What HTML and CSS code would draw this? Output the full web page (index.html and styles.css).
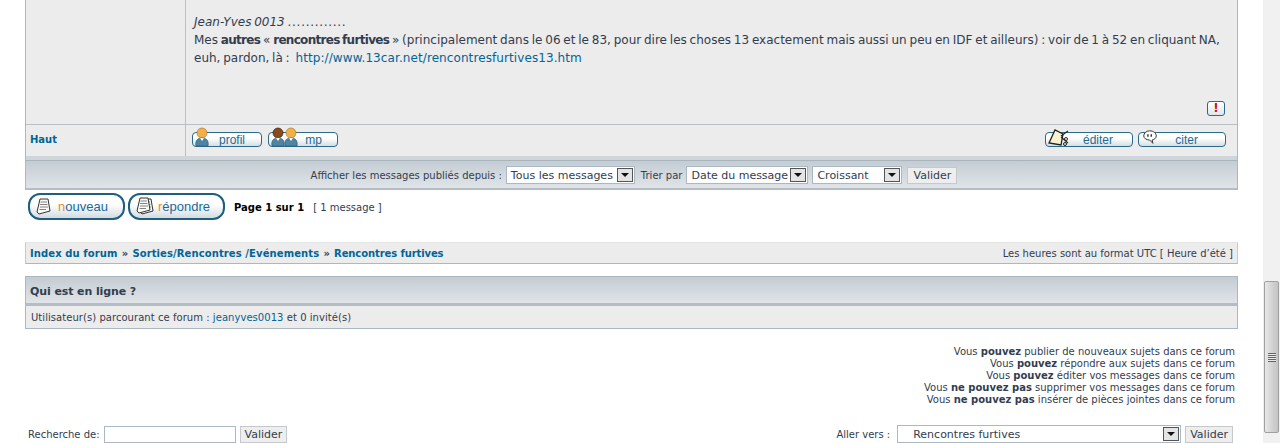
FILE: index.html
```html
<!DOCTYPE html>
<html lang="fr">
<head>
    <meta charset="UTF-8">
    <title>Rencontres furtives</title>
    <link rel="stylesheet" href="styles.css">
</head>
<body>
    <div class="page">
        <main class="content">
            <section class="post">
                <div class="post-row">
                    <div class="author"></div>
                    <div class="message">
                        <div class="message-text">
                            <em>Jean-Yves 0013</em> <span class="dots">.............</span><br>
                            Mes <b>autres</b> « <b>rencontres furtives</b> » (principalement dans le 06 et le 83, pour dire les choses 13 exactement mais aussi un peu en IDF et ailleurs) : voir de 1 à 52 en cliquant NA,<br>
                            euh, pardon, là : <a href="#">http://www.13car.net/rencontresfurtives13.htm</a>
                        </div>
                        <div class="report-row">
                            <span class="report">!</span>
                        </div>
                    </div>
                </div>
                <div class="post-foot">
                    <div class="author-foot"><a href="#">Haut</a></div>
                    <div class="post-actions">
                        <span class="small-btn btn-profil">
                            <svg class="btn-icon icon-user" width="16" height="20" viewBox="0 0 16 20"><use href="#user-orange"/></svg>
                            profil
                        </span>
                        <span class="small-btn btn-mp">
                            <svg class="btn-icon icon-user" width="30" height="20" viewBox="0 0 30 20"><use href="#user-brown"/><use href="#user-orange" x="13"/></svg>
                            mp
                        </span>
                        <span class="spacer"></span>
                        <span class="small-btn btn-editer">
                            <svg class="btn-icon icon-edit" width="22" height="18" viewBox="0 0 22 18">
                                <path d="M1 14 L7 1 L15 5 L13 16 Z" fill="#f7f2d0" stroke="#222" stroke-width="1.3"/>
                                <path d="M13 7 L20 2 M13 8 L20 14" stroke="#222" stroke-width="1.1" fill="none"/>
                                <circle cx="18" cy="10" r="1.5" fill="none" stroke="#222"/>
                                <circle cx="17" cy="15" r="1.5" fill="none" stroke="#222"/>
                            </svg>
                            éditer
                        </span>
                        <span class="small-btn btn-citer">
                            <svg class="btn-icon icon-quote" width="16" height="15" viewBox="0 0 19 18">
                                <path d="M9 1 C14 1 17 4 17 7 C17 10 14 12 12 12 L13 16 L9 12 C5 12 2 10 2 7 C2 4 5 1 9 1 Z" fill="#fff" stroke="#333" stroke-width="1.2"/>
                                <path d="M7 5 V8 M11 5 V8" stroke="#222" stroke-width="1.6"/>
                            </svg>
                            citer
                        </span>
                    </div>
                </div>
                <form class="sort-bar">
                    <span>Afficher les messages publiés depuis :</span>
                    <span class="select select-since">Tous les messages<span class="arrow"></span></span>
                    <span class="sort-label">Trier par</span>
                    <span class="select select-key">Date du message<span class="arrow"></span></span>
                    <span class="select select-dir">Croissant<span class="arrow"></span></span>
                    <button type="button" class="submit">Valider</button>
                </form>
            </section>

            <div class="pagination">
                <span class="big-btn btn-new">
                    <svg width="19" height="18" viewBox="0 0 19 18"><use href="#doc"/></svg>
                    <span class="label"><i>n</i>ouveau</span>
                </span>
                <span class="big-btn btn-reply">
                    <svg width="21" height="19" viewBox="0 0 21 19"><use href="#doc" x="3" y="1"/><use href="#doc"/></svg>
                    <span class="label"><i>r</i>épondre</span>
                </span>
                <span class="page-info"><b>Page 1 sur 1</b><span class="page-count">[ 1 message ]</span></span>
            </div>

            <nav class="crumbs">
                <div class="crumb-links"><a href="#">Index du forum</a> <b>»</b> <a href="#">Sorties/Rencontres /Evénements</a> <b>»</b> <a href="#">Rencontres furtives</a></div>
                <div class="timezone">Les heures sont au format UTC [ Heure d’été ]</div>
            </nav>

            <section class="online">
                <h4>Qui est en ligne ?</h4>
                <p>Utilisateur(s) parcourant ce forum : <a href="#">jeanyves0013</a> et 0 invité(s)</p>
            </section>

            <div class="rights">
                Vous <b>pouvez</b> publier de nouveaux sujets dans ce forum<br>
                Vous <b>pouvez</b> répondre aux sujets dans ce forum<br>
                Vous <b>pouvez</b> éditer vos messages dans ce forum<br>
                Vous <b>ne pouvez pas</b> supprimer vos messages dans ce forum<br>
                Vous <b>ne pouvez pas</b> insérer de pièces jointes dans ce forum
            </div>

            <div class="bottom-row">
                <form class="search">
                    <label for="search-box">Recherche de:</label>
                    <input type="text" id="search-box">
                    <button type="button" class="submit">Valider</button>
                </form>
                <form class="jump">
                    <span class="jump-label">Aller vers :</span>
                    <span class="select select-jump">Rencontres furtives<span class="arrow"></span></span>
                    <button type="button" class="submit">Valider</button>
                </form>
            </div>
        </main>

        <div class="scrollbar">
            <div class="thumb"><span class="grip"></span></div>
        </div>
    </div>

    <svg class="defs" width="0" height="0">
        <defs>
            <g id="user-orange">
                <circle cx="7" cy="6" r="5" fill="#f2b04a" stroke="#b9772a" stroke-width="0.7"/>
                <path d="M1 19 C0 13 3 11 7 11 C11 11 14 13 13 19 Z" fill="#4f84a3" stroke="#2f5f7c" stroke-width="0.7"/>
                <path d="M5 11 L7 14 L9 11 Z" fill="#fff"/>
            </g>
            <g id="user-brown">
                <circle cx="7" cy="6" r="5" fill="#8a4a1c" stroke="#3f2210" stroke-width="0.7"/>
                <path d="M1 19 C0 13 3 11 7 11 C11 11 14 13 13 19 Z" fill="#4f84a3" stroke="#2f5f7c" stroke-width="0.7"/>
                <path d="M5 11 L7 14 L9 11 Z" fill="#fff"/>
            </g>
            <g id="doc">
                <path d="M5 1 H13 L15 13 L4 16 L2 14 Z" fill="#fbfbf8" stroke="#333" stroke-width="1"/>
                <path d="M5.5 4 H12 M5 6.5 H12.5 M5 9 H13 M4.5 11.5 H11" stroke="#666" stroke-width="0.8"/>
            </g>
        </defs>
    </svg>
</body>
</html>
```

FILE: styles.css
```css
html, body {
    margin: 0;
    padding: 0;
    height: 443px;
    overflow: hidden;
    background-color: #ffffff;
}

body {
    font-family: "DejaVu Sans", Verdana, sans-serif;
    font-size: 10px;
    color: #323d4f;
}

a {
    color: #006597;
    text-decoration: none;
}

.defs {
    display: block;
    height: 0;
}

.page {
    display: flex;
    height: 443px;
}

.content {
    width: 1213px;
    margin-left: 25px;
    flex: none;
}

/* post */
.post {
    border-left: 1px solid #a9b8c2;
    border-right: 1px solid #a9b8c2;
    background-color: #ececec;
}

.post-row {
    display: flex;
    height: 124px;
    border-bottom: 1px solid #b8c0c6;
}

.author {
    width: 159px;
    flex: none;
    border-right: 1px solid #b8c0c6;
}

.message {
    flex: 1;
    display: flex;
    flex-direction: column;
    padding: 13px 12px 8px 8px;
}

.message-text {
    flex: 1;
    font-size: 12px;
    line-height: 18px;
    word-spacing: -1px;
    white-space: nowrap;
}

.message-text b {
    letter-spacing: -0.7px;
}

.message-text a {
    margin-left: 3px;
    letter-spacing: 0.09px;
}

.dots {
    letter-spacing: 0.7px;
}

.report-row {
    display: flex;
    justify-content: flex-end;
}

.report {
    width: 16px;
    height: 13px;
    border: 1px solid #2a6a8a;
    border-radius: 3px;
    background: linear-gradient(#ffffff, #dfe5ea);
    color: #d01010;
    font-size: 12px;
    font-weight: bold;
    line-height: 13px;
    text-align: center;
}

.post-foot {
    display: flex;
    height: 31px;
    border-bottom: 1px solid #cfd5da;
    background-color: #ececec;
}

.author-foot {
    width: 155px;
    flex: none;
    padding: 9px 0 0 4px;
    border-right: 1px solid #b8c0c6;
    font-weight: bold;
}

.post-actions {
    flex: 1;
    display: flex;
    gap: 6px;
    padding: 7px 11px 0 6px;
}

.spacer {
    flex: 1;
}

.small-btn {
    position: relative;
    height: 13px;
    border: 1px solid #2a6a8a;
    border-radius: 4px;
    background: linear-gradient(#ffffff 40%, #d5dde3);
    font-family: "Liberation Sans", Arial, sans-serif;
    font-size: 12px;
    line-height: 14px;
    color: #1f6a94;
    text-align: right;
}

.btn-icon {
    position: absolute;
}

.icon-user {
    left: 2px;
    bottom: -1px;
}

.icon-edit {
    left: 2px;
    bottom: -1px;
}

.icon-quote {
    left: 3px;
    bottom: 1px;
}

.btn-profil {
    width: 52px;
    padding-right: 16px;
}

.btn-mp {
    width: 53px;
    padding-right: 15px;
}

.btn-editer {
    width: 67px;
    padding-right: 19px;
}

.btn-citer {
    width: 59px;
    padding-right: 27px;
    margin-left: -1px;
}

.sort-bar {
    display: flex;
    align-items: center;
    justify-content: center;
    gap: 4px;
    height: 26px;
    padding: 2px 0 0 5px;
    border-top: 3px solid #d0d5da;
    border-bottom: 2px solid #b5bdc4;
    background: linear-gradient(#c3ccd3, #e0e4e8);
    box-shadow: inset 0 1px 0 #a9b5bd;
}

.sort-bar .submit {
    width: 50px;
    margin-left: 1px;
    padding: 0;
}

.sort-label {
    margin-left: 2px;
}

.select {
    display: inline-flex;
    align-items: center;
    justify-content: space-between;
    box-sizing: border-box;
    height: 18px;
    padding: 0 1px 0 4px;
    border: 1px solid #a9b8c2;
    background-color: #ffffff;
    font-size: 11px;
    color: #323d4f;
    white-space: nowrap;
}

.arrow {
    position: relative;
    box-sizing: border-box;
    width: 16px;
    height: 14px;
    flex: none;
    border: 1px solid #555;
    background-color: #e4e4e4;
}

.arrow::after {
    content: "";
    position: absolute;
    left: 3px;
    top: 4px;
    border-left: 4px solid transparent;
    border-right: 4px solid transparent;
    border-top: 4px solid #111;
}

.select-since {
    width: 129px;
}

.select-key {
    width: 122px;
}

.select-dir {
    width: 90px;
}

.select-jump {
    width: 284px;
    padding-left: 15px;
}

.submit {
    height: 17px;
    padding: 0 4px;
    border: 1px solid #c4c9cd;
    background-color: #eeeeee;
    font-family: "DejaVu Sans", Verdana, sans-serif;
    font-size: 11px;
    line-height: 15px;
    color: #323d4f;
}

/* pagination */
.pagination {
    display: flex;
    align-items: center;
    height: 27px;
    margin-top: 3px;
    padding-left: 3px;
    gap: 3px;
}

.big-btn {
    display: flex;
    align-items: center;
    box-sizing: border-box;
    width: 97px;
    height: 27px;
    padding-left: 5px;
    border: 2px solid #1e5f80;
    border-radius: 12px;
    background: linear-gradient(#ffffff 40%, #d3dce2);
    font-family: "Liberation Sans", Arial, sans-serif;
    font-size: 13px;
    color: #1a6a9a;
}

.big-btn i {
    font-style: normal;
    color: #f08a24;
}

.btn-new .label {
    margin-left: 4px;
}

.btn-reply .label {
    margin-left: 2px;
}

.page-info {
    margin: 2px 0 0 6px;
    color: #000000;
}

.page-count {
    margin-left: 9px;
    color: #323d4f;
}

/* breadcrumbs */
.crumbs {
    display: flex;
    justify-content: space-between;
    align-items: center;
    height: 20px;
    margin-top: 22px;
    padding: 0 4px;
    border: 1px solid #c5ccd1;
    border-bottom-color: #a9b8c2;
    border-top-color: #e4e4e4;
    background-color: #ececec;
}

.crumb-links a {
    font-weight: bold;
    letter-spacing: 0.1px;
}

.crumb-links a:last-child {
    letter-spacing: -0.1px;
}

.crumb-links b {
    margin: 0 1px;
    color: #323d4f;
}

/* who is online */
.online {
    margin-top: 12px;
    border: 1px solid #a9b8c2;
    background-color: #ececec;
}

.online h4 {
    margin: 0;
    height: 26px;
    padding: 0 4px;
    border-bottom: 3px solid #b5bdc4;
    background: linear-gradient(#c3ccd3, #e0e4e8);
    font-size: 11px;
    letter-spacing: -0.1px;
    line-height: 29px;
}

.online p {
    margin: 0;
    padding: 6px 5px 4px;
    letter-spacing: 0.05px;
    line-height: 12px;
}

.rights {
    margin-top: 17px;
    padding-right: 3px;
    line-height: 12px;
    text-align: right;
}

.bottom-row {
    display: flex;
    justify-content: space-between;
    margin-top: 19px;
    padding: 0 5px 0 3px;
}

.search,
.jump {
    display: flex;
    align-items: center;
    gap: 4px;
    margin: 0;
}

.search input {
    box-sizing: border-box;
    width: 132px;
    height: 17px;
    margin: 0;
    border: 1px solid #a9b8c2;
}

.jump-label {
    margin-right: 3px;
}

/* scrollbar */
.scrollbar {
    box-sizing: border-box;
    width: 17px;
    height: 443px;
    margin-left: auto;
    padding: 281px 1px 0;
    background-color: #f1f1f1;
}

.thumb {
    display: flex;
    align-items: center;
    justify-content: center;
    box-sizing: border-box;
    height: 152px;
    border: 1px solid #a0a0a0;
    border-radius: 2px;
    background: linear-gradient(90deg, #e8e8e8, #d4d4d4 50%, #c4c4c4);
}

.grip {
    width: 8px;
    height: 9px;
    background: repeating-linear-gradient(#666 0 1px, #e8e8e8 1px 2px);
}
```
